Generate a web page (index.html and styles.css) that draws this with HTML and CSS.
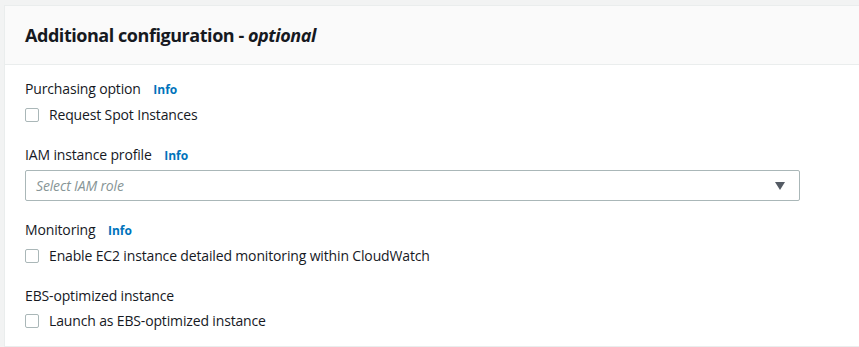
FILE: index.html
```html
<!DOCTYPE html>
<html>

<head>
    <title>Additional configuration</title>
    <link rel="stylesheet" href="styles.css">
</head>

<body>
    <div class="panel">
        <div class="panelHeader">
            <h2>Additional configuration - <i>optional</i></h2>
        </div>
        <div class="panelBody">
            <div class="field">
                <div class="label">Purchasing option <a href="#" class="info">Info</a></div>
                <label class="check"><input type="checkbox"> Request Spot Instances</label>
            </div>

            <div class="field">
                <div class="label">IAM instance profile <a href="#" class="info">Info</a></div>
                <div class="select">
                    <span class="placeholder">Select IAM role</span>
                    <svg class="caret" width="10" height="8" viewBox="0 0 10 8">
                        <polygon points="0,0 10,0 5,8" fill="#545b64" />
                    </svg>
                </div>
            </div>

            <div class="field">
                <div class="label">Monitoring <a href="#" class="info">Info</a></div>
                <label class="check"><input type="checkbox"> Enable EC2 instance detailed monitoring within CloudWatch</label>
            </div>

            <div class="field">
                <div class="label">EBS-optimized instance</div>
                <label class="check"><input type="checkbox"> Launch as EBS-optimized instance</label>
            </div>
        </div>
    </div>
</body>

</html>
```

FILE: styles.css
```css
body {
    font-family: "Open Sans", Arial, sans-serif;
    margin: 0;
    padding: 5px 0 0 4px;
    background-color: #f2f3f3;
    color: #16191f;
    font-size: 14px;
    letter-spacing: -0.15px;
}

.panel {
    background-color: #fff;
    border: 1px solid #eaeded;
    border-right: none;
}

.panelHeader {
    background-color: #fafafa;
    border-bottom: 1px solid #eaeded;
    height: 58px;
    padding: 0 20px;
    display: flex;
    align-items: center;
}

.panelHeader h2 {
    margin: 0;
    font-size: 18px;
    font-weight: 700;
    letter-spacing: -0.45px;
}

.panelBody {
    padding: 13px 20px 14px 20px;
    display: flex;
    flex-direction: column;
    gap: 18px;
}

.field {
    display: flex;
    flex-direction: column;
    gap: 3px;
}

.label {
    line-height: 22px;
}

.info {
    color: #0073bb;
    font-size: 12px;
    font-weight: 700;
    text-decoration: none;
    margin-left: 9px;
    letter-spacing: 0;
}

.check {
    display: flex;
    align-items: center;
    line-height: 22px;
}

.check input {
    appearance: none;
    width: 14px;
    height: 14px;
    margin: 0 10px 0 0;
    border: 1px solid #aab7b8;
    border-radius: 2px;
    background: #fff;
}

.select {
    height: 29px;
    width: 749px;
    border: 1px solid #aab7b8;
    border-radius: 2px;
    display: flex;
    align-items: center;
    justify-content: space-between;
    padding: 0 14px 0 10px;
    box-sizing: content-box;
}

.placeholder {
    color: #879596;
    font-style: italic;
}
```
